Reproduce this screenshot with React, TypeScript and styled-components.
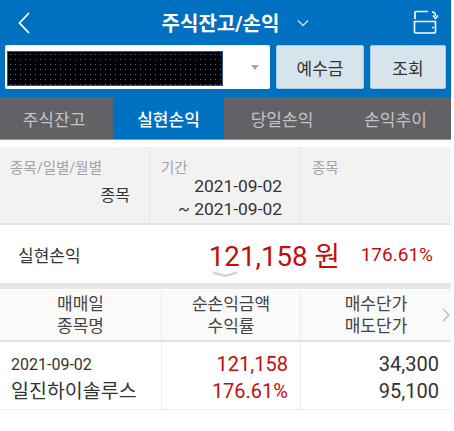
import styled, { createGlobalStyle } from "styled-components";

const GlobalStyle = createGlobalStyle`
    html, body {
        margin: 0;
        padding: 0;
        background: #ffffff;
    }
    body {
        font-family: "Roboto", "Noto Sans CJK KR", sans-serif;
    }
`;

const Page = styled.div`
    width: 451px;
    height: 431px;
    overflow: hidden;
    background: #ffffff;
    color: #333333;
`;

const TopBar = styled.div`
    background: #0070c0;
    height: 97px;
    box-sizing: border-box;
`;
const TitleRow = styled.div`
    height: 45px;
    display: flex;
    align-items: center;
    justify-content: space-between;
    padding: 0 12px 0 18px;
`;
const Title = styled.div`
    display: flex;
    align-items: center;
    gap: 18px;
    color: #ffffff;
    font-size: 20px;
    font-weight: 700;
    margin-left: 28px;
`;
const SearchRow = styled.div`
    display: flex;
    padding: 0 5px;
    gap: 6px;
`;
const AccountSelect = styled.div`
    width: 265px;
    height: 44px;
    box-sizing: border-box;
    background: #ffffff;
    border-radius: 2px;
    padding: 6px 2px;
    display: flex;
    align-items: flex-start;
    position: relative;
`;
const Masked = styled.div`
    width: 216px;
    height: 35px;
    background-color: #000000;
    background-image: radial-gradient(#4468c8 0.6px, transparent 0.8px);
    background-size: 5px 5px;
    border: 1px solid #33507a;
    box-sizing: border-box;
`;
const Caret = styled.div`
    position: absolute;
    right: 11px;
    top: 20px;
    width: 0;
    height: 0;
    border-left: 4px solid transparent;
    border-right: 4px solid transparent;
    border-top: 5px solid #a8a8a8;
`;
const ActionButton = styled.button<{ $width: number }>`
    width: ${(p) => p.$width}px;
    height: 44px;
    border: 1px solid #a9cce6;
    border-radius: 2px;
    background: #d8e4ec;
    color: #333333;
    font-family: inherit;
    font-size: 17px;
    padding: 0;
`;

const Tabs = styled.div`
    display: grid;
    grid-template-columns: 113px 111px 113px 114px;
    height: 43px;
    background: #626166;
    border-bottom: 1px solid #9a9a9a;
    box-sizing: border-box;
`;
const Tab = styled.div<{ $active?: boolean; $shift?: number }>`
    display: flex;
    align-items: center;
    justify-content: center;
    box-sizing: border-box;
    padding-left: ${(p) => Math.max(p.$shift ?? 0, 0)}px;
    padding-right: ${(p) => Math.max(-(p.$shift ?? 0), 0)}px;
    font-size: 17px;
    font-weight: ${(p) => (p.$active ? 500 : 400)};
    color: ${(p) => (p.$active ? "#ffffff" : "#c4c4c4")};
    background: ${(p) => (p.$active ? "#0070c0" : "transparent")};
`;

const Filters = styled.div`
    margin-top: 7px;
    height: 78px;
    background: #f2f2f2;
    border-bottom: 2px solid #e3e3e3;
    box-sizing: border-box;
    display: grid;
    grid-template-columns: 150px 151px 150px;
`;
const FilterCell = styled.div`
    padding: 13px 0 0 11px;
    box-sizing: border-box;
    border-right: 1px solid #e6e6e6;
    &:first-child {
        padding-left: 10px;
    }
    &:last-child {
        border-right: 0;
    }
`;
const FilterLabel = styled.div`
    font-size: 14.5px;
    line-height: 18px;
    color: #a3a3a3;
`;
const FilterValue = styled.div`
    font-size: 16px;
    line-height: 23px;
    color: #333333;
    text-align: right;
    padding-right: 19px;
    margin-top: 6px;
`;
const PeriodValue = styled.div`
    font-size: 17.4px;
    line-height: 23px;
    color: #333333;
    text-align: right;
    padding-right: 18px;
    margin-top: -3px;
    white-space: pre-line;
`;

const Summary = styled.div`
    height: 58px;
    display: flex;
    align-items: center;
    padding: 0 18px;
    position: relative;
`;
const SummaryLabel = styled.div`
    font-size: 17px;
    width: 191px;
`;
const SummaryAmount = styled.div`
    font-size: 27.7px;
    color: #c40d0d;
    width: 152px;
`;
const SummaryRate = styled.div`
    font-size: 19px;
    color: #c40d0d;
    white-space: nowrap;
`;
const Handle = styled.svg`
    position: absolute;
    left: 212px;
    bottom: 5px;
`;
const Band = styled.div`
    height: 6px;
    background: #e6e6e6;
`;

const HeaderRow = styled.div`
    display: grid;
    grid-template-columns: 162px 139px 150px;
    height: 52px;
    margin-top: 1px;
    background: #fafafa;
    border-bottom: 2px solid #e3e3e3;
    box-sizing: border-box;
    position: relative;
`;
const HeaderCell = styled.div`
    display: flex;
    flex-direction: column;
    align-items: center;
    justify-content: center;
    font-size: 17px;
    line-height: 22px;
    color: #444444;
    border-right: 1px solid #ececec;
    &:last-of-type {
        border-right: 0;
    }
`;
const MoreArrow = styled.svg`
    position: absolute;
    right: 1px;
    top: 18px;
`;
const DataRow = styled.div`
    display: grid;
    grid-template-columns: 162px 139px 150px;
    height: 68px;
    border-bottom: 1px solid #ececec;
    box-sizing: border-box;
`;
const DataCell = styled.div<{ $align?: "left" | "right"; $red?: boolean }>`
    display: flex;
    flex-direction: column;
    justify-content: center;
    box-sizing: border-box;
    padding: ${(p) => (p.$align === "left" ? "5px 0 0 11px" : "5px 12px 0 0")};
    text-align: ${(p) => p.$align ?? "right"};
    color: ${(p) => (p.$red ? "#c40d0d" : "#333333")};
    border-right: 1px solid #ececec;
    font-size: 20px;
    line-height: 27px;
    &:last-child {
        border-right: 0;
    }
`;
const DateText = styled.div`
    font-size: 16px;
`;
const NameText = styled.div`
    font-size: 19.5px;
    white-space: nowrap;
`;

export default function App() {
    return (
        <Page>
            <GlobalStyle />
            <TopBar>
                <TitleRow>
                    <svg width="12" height="22" viewBox="0 0 12 22" fill="none">
                        <path d="M11 1 1.5 11 11 21" stroke="#fff" strokeWidth="1.8" />
                    </svg>
                    <Title>
                        주식잔고/손익
                        <svg width="12" height="8" viewBox="0 0 12 8" fill="none">
                            <path d="M1 1.5 6 6.5 11 1.5" stroke="#cfe3f3" strokeWidth="1.3" />
                        </svg>
                    </Title>
                    <svg width="26" height="25" viewBox="0 0 26 25" fill="none" stroke="#fff" strokeWidth="1.6">
                        <path d="M15 1.5H3a1 1 0 0 0-1 1V9" />
                        <path d="M1.5 11.5h21V22a1 1 0 0 1-1 1H2.5a1 1 0 0 1-1-1z" />
                        <path d="M19 2c2.5 0 3.5 1.5 3.5 4" />
                        <path d="M20 5.5 22.5 8.5 25 5.500" />
                        <path d="M19 17.5h2" />
                    </svg>
                </TitleRow>
                <SearchRow>
                    <AccountSelect>
                        <Masked />
                        <Caret />
                    </AccountSelect>
                    <ActionButton $width={88}>예수금</ActionButton>
                    <ActionButton $width={76}>조회</ActionButton>
                </SearchRow>
            </TopBar>
            <Tabs>
                <Tab $shift={-5}>주식잔고</Tab>
                <Tab $active>실현손익</Tab>
                <Tab $shift={3}>당일손익</Tab>
                <Tab $shift={3}>손익추이</Tab>
            </Tabs>
            <Filters>
                <FilterCell>
                    <FilterLabel>종목/일별/월별</FilterLabel>
                    <FilterValue>종목</FilterValue>
                </FilterCell>
                <FilterCell>
                    <FilterLabel>기간</FilterLabel>
                    <PeriodValue>{"2021-09-02\n~ 2021-09-02"}</PeriodValue>
                </FilterCell>
                <FilterCell>
                    <FilterLabel>종목</FilterLabel>
                </FilterCell>
            </Filters>
            <Summary>
                <SummaryLabel>실현손익</SummaryLabel>
                <SummaryAmount>121,158 원</SummaryAmount>
                <SummaryRate>176.61%</SummaryRate>
                <Handle width="26" height="7" viewBox="0 0 26 7" fill="none">
                    <path d="M1 1.5 13 5 25 1.5" stroke="#d4d4d4" strokeWidth="2.4" />
                </Handle>
            </Summary>
            <Band />
            <HeaderRow>
                <HeaderCell>
                    <div>매매일</div>
                    <div>종목명</div>
                </HeaderCell>
                <HeaderCell>
                    <div>순손익금액</div>
                    <div>수익률</div>
                </HeaderCell>
                <HeaderCell>
                    <div>매수단가</div>
                    <div>매도단가</div>
                </HeaderCell>
                <MoreArrow width="8" height="14" viewBox="0 0 8 14" fill="none">
                    <path d="M1 1 7 7 1 13" stroke="#b5b5b5" strokeWidth="1.2" />
                </MoreArrow>
            </HeaderRow>
            <DataRow>
                <DataCell $align="left">
                    <DateText>2021-09-02</DateText>
                    <NameText>일진하이솔루스</NameText>
                </DataCell>
                <DataCell $red>
                    <div>121,158</div>
                    <div>176.61%</div>
                </DataCell>
                <DataCell>
                    <div>34,300</div>
                    <div>95,100</div>
                </DataCell>
            </DataRow>
        </Page>
    );
}
